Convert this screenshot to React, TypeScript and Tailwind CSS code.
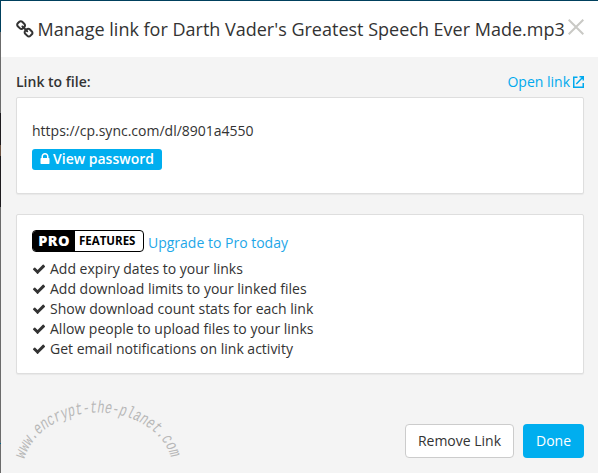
import React from 'react';

interface IconProps {
    path: string;
    className?: string;
}

const CHAIN = 'M1456 1216q0-40-28-68l-208-208q-28-28-68-28-42 0-72 32 3 3 19 18.5t21.5 21.5 15 19 13 25.5 3.5 27.5q0 40-28 68t-68 28q-15 0-27.5-3.5t-25.5-13-19-15-21.5-21.5-18.5-19q-33 31-33 73 0 40 28 68l206 207q27 27 68 27 40 0 68-26l147-146q28-28 28-67zm-703-705q0-40-28-68l-206-207q-28-28-68-28-39 0-68 27l-147 146q-28 28-28 67 0 40 28 68l208 208q27 27 68 27 42 0 72-31-3-3-19-18.5t-21.5-21.5-15-19-13-25.5-3.5-27.5q0-40 28-68t68-28q15 0 27.5 3.5t25.5 13 19 15 21.5 21.5 18.5 19q33-31 33-73zm895 705q0 120-85 203l-147 146q-83 83-203 83-121 0-204-85l-206-207q-83-83-83-203 0-123 88-209l-88-88q-86 88-208 88-120 0-204-84l-208-208q-84-84-84-204t85-203l147-146q83-83 203-83 121 0 204 85l206 207q83 83 83 203 0 123-88 209l88 88q86-88 208-88 120 0 204 84l208 208q84 84 84 204z';
const LOCK = 'M640 768h512v-192q0-106-75-181t-181-75-181 75-75 181v192zm832 96v576q0 40-28 68t-68 28h-960q-40 0-68-28t-28-68v-576q0-40 28-68t68-28h32v-192q0-184 132-316t316-132 316 132 132 316v192h32q40 0 68 28t28 68z';
const CHECK = 'M1671 566q0 40-28 68l-724 724-136 136q-28 28-68 28t-68-28l-136-136-362-362q-28-28-28-68t28-68l136-136q28-28 68-28t68 28l294 295 656-657q28-28 68-28t68 28l136 136q28 28 28 68z';

const Icon: React.FC<IconProps> = ({ path, className }) => (
    <svg viewBox="0 0 1792 1792" fill="currentColor" className={className}>
        <path d={path} />
    </svg>
);

const features = [
    'Add expiry dates to your links',
    'Add download limits to your linked files',
    'Show download count stats for each link',
    'Allow people to upload files to your links',
    'Get email notifications on link activity',
];

// Sliver of the dimmed page left of the dialog
const Backdrop = () => (
    <div className="flex w-px shrink-0 flex-col bg-[#6b6b6b]">
        <div className="h-[31px] bg-[#00405d]" />
        <div className="h-[81px]" />
        <div className="h-[32px] bg-[#1d1b1e]" />
        <div className="h-[11px] bg-[#6b5241]" />
        <div className="h-[51px] bg-[#1d1b1e]" />
        <div className="h-[236px]" />
        <div className="h-px bg-[#00698c]" />
    </div>
);

const Watermark = () => (
    <svg width="186" height="70" viewBox="0 0 186 70" className="absolute left-[5px] top-[397px]">
        <path id="arc" d="M19.5 62A75 58 0 0 1 166.5 62" fill="none" />
        <text
            fill="#b8b8b8"
            className="font-['Liberation_Mono',monospace] text-[17px] italic"
        >
            <textPath href="#arc" textLength="185" lengthAdjust="spacingAndGlyphs">www.encrypt-the-planet.com</textPath>
        </text>
    </svg>
);

export default function App() {
    return (
        <div className="relative flex h-[473px] w-[598px] flex-col overflow-hidden bg-[#f4f4f4] font-['Open_Sans',sans-serif] text-sm leading-5 text-[#333]">
            <div className="h-px shrink-0 bg-[#00405d]" />
            <div className="flex min-h-0 flex-1">
                <Backdrop />
                <div className="flex min-w-0 flex-1 flex-col">
                    <header className="flex h-14 shrink-0 items-center bg-white pl-[14.5px] pr-[14px]">
                        <Icon path={CHAIN} className="h-[19px] w-[19px] shrink-0" />
                        <h1 className="ml-[3px] whitespace-nowrap text-[18px] leading-6">
                            Manage link for Darth Vader's Greatest Speech Ever Made.mp3
                        </h1>
                        <svg viewBox="0 0 16 16" className="mb-1 ml-auto h-4 w-4 shrink-0 text-[#c9c9c5]">
                            <path d="M.7.7l14.6 14.6M15.3.7L.7 15.3" stroke="currentColor" strokeWidth="2" />
                        </svg>
                    </header>

                    <main className="flex flex-1 flex-col pl-[15px] pr-3.5">
                        <div className="mt-[15px] flex h-5 items-center justify-between">
                            <span className="font-semibold">Link to file:</span>
                            <a className="flex items-center gap-[3px] text-[#00a9ee]">
                                Open link
                                <svg viewBox="0 0 11 12" fill="none" stroke="currentColor" strokeWidth="1.5" className="mb-px h-3 w-[11px]">
                                    <path d="M4.5 1.25H.75v10h9.5V7M6.5.75h3.75V4.5M10 1L3.3 8" />
                                </svg>
                            </a>
                        </div>

                        <section className="mt-[5px] h-[97px] shrink-0 rounded-xs border border-[#dedede] bg-white px-[15px] pt-[23px] shadow-[0_1px_1px_rgba(0,0,0,0.05)]">
                            <p>https://cp.sync.com/dl/8901a4550</p>
                            <button className="mt-2 flex h-[21px] w-[130px] items-center rounded-[3px] bg-[#00aeef] pb-px pl-[6px] font-semibold text-white">
                                <Icon path={LOCK} className="mr-px h-3.5 w-3.5" />
                                View password
                            </button>
                        </section>

                        <section className="mt-5 h-[160px] shrink-0 rounded-xs border border-[#dedede] bg-white px-[15px] pt-[15px] shadow-[0_1px_1px_rgba(0,0,0,0.05)]">
                            <div className="flex h-[22px] items-center">
                                <span className="flex h-[22px] w-[112px] overflow-hidden rounded-[4px] border border-black text-black">
                                    <span className="flex w-[42px] items-center justify-center bg-black text-[14.5px] font-extrabold tracking-[0.4px] text-white">
                                        PRO
                                    </span>
                                    <span className="flex flex-1 items-center pl-1 text-[11.5px] font-bold">
                                        FEATURES
                                    </span>
                                </span>
                                <a className="ml-1 mt-1 text-[#1ea7e8]">Upgrade to Pro today</a>
                            </div>
                            <ul className="mt-[7px]">
                                {features.map((feature) => (
                                    <li key={feature} className="flex h-5 items-center">
                                        <Icon path={CHECK} className="mr-1 h-3.5 w-3.5" />
                                        {feature}
                                    </li>
                                ))}
                            </ul>
                        </section>

                        <footer className="mt-[50px] flex justify-end gap-[9px]">
                            <button className="h-[34px] w-[109px] rounded-[4px] border border-[#ccc] bg-white">
                                Remove Link
                            </button>
                            <button className="h-[34px] w-[61px] rounded-[4px] bg-[#00aeef] text-white">
                                Done
                            </button>
                        </footer>
                    </main>
                </div>
            </div>
            <Watermark />
        </div>
    );
}
